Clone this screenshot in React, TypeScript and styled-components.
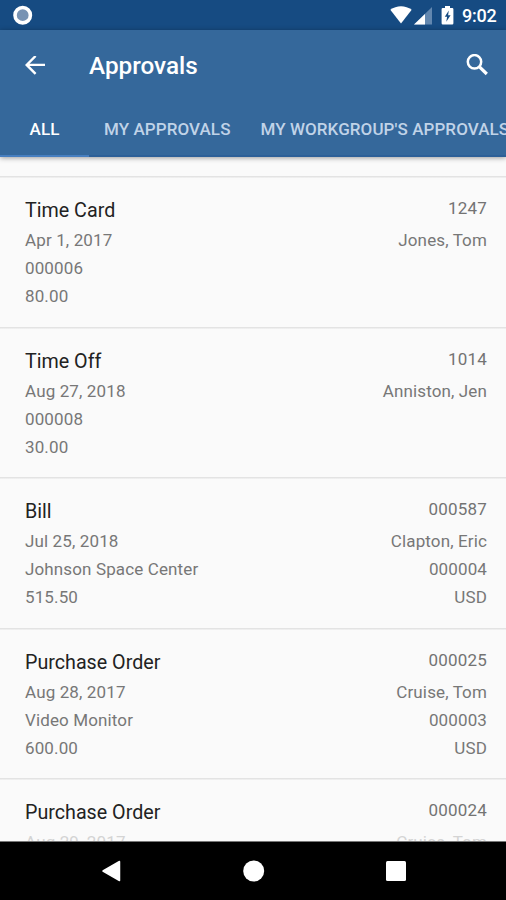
import React from "react";
import styled, { createGlobalStyle } from "styled-components";

const GlobalStyle = createGlobalStyle`
  * { box-sizing: border-box; }
  body { margin: 0; background: #000; }
`;

const Screen = styled.div`
  width: 506px;
  height: 900px;
  display: flex;
  flex-direction: column;
  overflow: hidden;
  background: #fafafa;
  font-family: Roboto, sans-serif;
`;

const StatusBar = styled.div`
  flex: none;
  height: 30px;
  display: flex;
  align-items: center;
  justify-content: space-between;
  padding: 0 9px 0 13px;
  background: #164b82;
  color: #fff;
`;

const StatusIcons = styled.div`
  display: flex;
  align-items: center;
`;

const Clock = styled.span`
  width: 35px;
  margin-left: 8px;
  font-size: 18px;
  line-height: 30px;
  font-weight: 500;
  letter-spacing: -0.2px;
  padding-top: 2px;
`;

const Header = styled.header`
  flex: none;
  height: 127px;
  background: #35689b;
  box-shadow: 0 1px 5px rgba(0, 0, 0, 0.38);
  z-index: 1;
`;

const Toolbar = styled.div`
  height: 71px;
  display: flex;
  align-items: center;
  padding: 0 17px 0 25px;
`;

const Title = styled.h1`
  flex: 1;
  margin: 0 0 0 44px;
  color: #fff;
  font-size: 24.3px;
  font-weight: 500;
  line-height: 32px;
`;

const Tabs = styled.nav`
  height: 56px;
  display: flex;
  overflow: hidden;
`;

const Tab = styled.div<{ $active?: boolean }>`
  flex: none;
  width: ${(p) => (p.$active ? "89px" : "auto")};
  padding: 0 ${(p) => (p.$active ? "0" : "15px")};
  text-align: center;
  color: ${(p) => (p.$active ? "#fff" : "#c0d3e8")};
  border-bottom: 2px solid ${(p) => (p.$active ? "#477fc0" : "#2d6098")};
  font-size: 17px;
  font-weight: 500;
  line-height: 57px;
  letter-spacing: 0.08px;
  white-space: nowrap;
`;

const List = styled.main`
  flex: 1;
  min-height: 0;
  padding-top: 19px;
  overflow: hidden;
  border-bottom: 1px solid #777;
`;

const Row = styled.section`
  height: 150.6px;
  display: flex;
  justify-content: space-between;
  padding: 19px 19px 0 25px;
  background: linear-gradient(#e3e3e3, #e3e3e3) top / 100% 1.5px no-repeat;
`;

const Column = styled.div<{ $right?: boolean }>`
  text-align: ${(p) => (p.$right ? "right" : "left")};
`;

const Name = styled.div`
  height: 31px;
  color: #222;
  font-size: 19.7px;
  line-height: 31px;
`;

const Reference = styled.div`
  height: 31px;
  color: #737373;
  font-size: 17px;
  line-height: 27px;
  letter-spacing: 0.2px;
`;

const Detail = styled.div<{ $faded?: boolean }>`
  height: 28.1px;
  color: ${(p) => (p.$faded ? "#d4d4d4" : "#777")};
  font-size: 17px;
  line-height: 28.1px;
  letter-spacing: 0.13px;
`;

const NavBar = styled.footer`
  flex: none;
  height: 58px;
  display: flex;
  align-items: center;
  justify-content: space-between;
  padding: 0 100px 0 101px;
  background: #000;
`;

type Approval = { name: string; reference: string; left: string[]; right: string[] };

const approvals: Approval[] = [
  { name: "Time Card", reference: "1247", left: ["Apr 1, 2017", "000006", "80.00"], right: ["Jones, Tom"] },
  { name: "Time Off", reference: "1014", left: ["Aug 27, 2018", "000008", "30.00"], right: ["Anniston, Jen"] },
  { name: "Bill", reference: "000587", left: ["Jul 25, 2018", "Johnson Space Center", "515.50"], right: ["Clapton, Eric", "000004", "USD"] },
  { name: "Purchase Order", reference: "000025", left: ["Aug 28, 2017", "Video Monitor", "600.00"], right: ["Cruise, Tom", "000003", "USD"] },
  { name: "Purchase Order", reference: "000024", left: ["Aug 29, 2017"], right: ["Cruise, Tom"] },
];

export default function App() {
  return (
    <Screen>
      <GlobalStyle />
      <StatusBar>
        <svg width="20" height="20" viewBox="0 0 20 20">
          <circle cx="9.7" cy="10.2" r="7.7" fill="#7893b3" stroke="#fff" strokeWidth="3.6" />
        </svg>
        <StatusIcons>
          <svg width="64" height="20" viewBox="0 0 64 20">
            <path d="M0.300 4.700C6.500 0 15.500 0 21.700 4.700L11 18.600Z" fill="#fff" />
            <path d="M42 2V19.500H24Z" fill="#6287af" />
            <path d="M35 9V19.500H24Z" fill="#fff" />
            <path d="M55 1h5v2h2.200q1.200 0 1.200 1.200v14q0 1.200-1.200 1.200h-9.400q-1.200 0-1.200-1.200v-14Q51.600 3 52.800 3H55Z" fill="#fff" />
            <path d="M58.800 5.500l-4 6.200h2.300l-.8 5 4.300-6.500h-2.500Z" fill="#164b82" />
          </svg>
          <Clock>9:02</Clock>
        </StatusIcons>
      </StatusBar>
      <Header>
        <Toolbar>
          <svg width="20" height="20" viewBox="0 0 20 20" fill="none" stroke="#fff" strokeWidth="2.400">
            <path d="M10.600 0 1.700 8.900l8.900 8.900M1.700 8.900H20" />
          </svg>
          <Title>Approvals</Title>
          <svg width="23" height="23" viewBox="0 0 23 23" fill="none" stroke="#fff">
            <circle cx="8.500" cy="7.800" r="6.700" strokeWidth="2.500" />
            <path d="M13.500 12.800l7.300 7.200" strokeWidth="3.200" />
          </svg>
        </Toolbar>
        <Tabs>
          <Tab $active>ALL</Tab>
          <Tab>MY APPROVALS</Tab>
          <Tab>MY WORKGROUP'S APPROVALS</Tab>
        </Tabs>
      </Header>
      <List>
        {approvals.map((item, i) => (
          <Row key={i}>
            <Column>
              <Name>{item.name}</Name>
              {item.left.map((text, n) => <Detail key={n} $faded={i === approvals.length - 1}>{text}</Detail>)}
            </Column>
            <Column $right>
              <Reference>{item.reference}</Reference>
              {item.right.map((text, n) => <Detail key={n} $faded={i === approvals.length - 1}>{text}</Detail>)}
            </Column>
          </Row>
        ))}
      </List>
      <NavBar>
        <svg width="20" height="22" viewBox="0 0 20 22"><path d="M18.500 1.500v19L2 11Z" fill="#fff" stroke="#fff" strokeWidth="1.500" strokeLinejoin="round" /></svg>
        <svg width="22" height="22" viewBox="0 0 22 22"><circle cx="10.700" cy="11" r="10.500" fill="#fff" /></svg>
        <svg width="20" height="20" viewBox="0 0 20 20"><rect width="20" height="20" rx="1.500" fill="#fff" /></svg>
      </NavBar>
    </Screen>
  );
}
